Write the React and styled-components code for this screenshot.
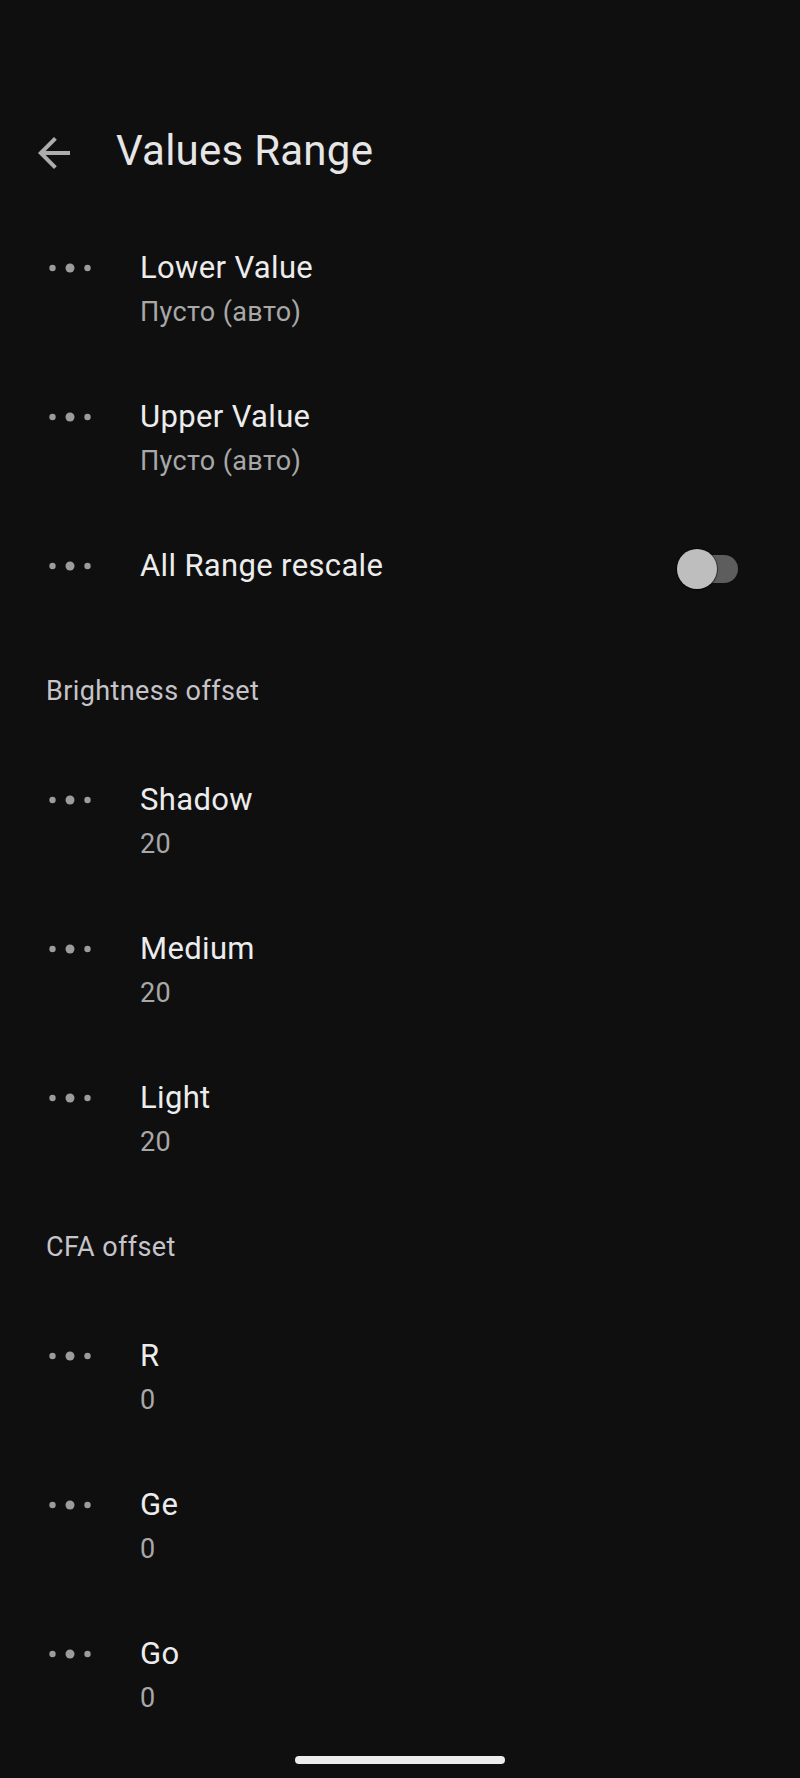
import React from 'react';
import styled, { createGlobalStyle } from 'styled-components';

const GlobalStyle = createGlobalStyle`
  html, body {
    margin: 0;
    padding: 0;
    background: #0f0f0f;
  }
  body {
    font-family: 'Roboto', 'Noto Sans', sans-serif;
    -webkit-font-smoothing: antialiased;
  }
`;

const Screen = styled.div`
  width: 800px;
  min-height: 1778px;
  background: #0f0f0f;
  display: flex;
  flex-direction: column;
  overflow: hidden;
`;

const AppBar = styled.div`
  display: flex;
  align-items: center;
  padding: 123px 0 35px 30px;
`;

const BackButton = styled.button`
  width: 48px;
  height: 48px;
  padding: 0;
  margin: 4px 38px 0 0;
  border: none;
  background: transparent;
  color: #adadad;
  display: flex;
  align-items: center;
  justify-content: center;
`;

const Title = styled.h1`
  margin: 0;
  font-size: 42px;
  line-height: 56px;
  font-weight: 400;
  letter-spacing: 0.25px;
  color: #e6e6e6;
`;

const List = styled.div`
  display: flex;
  flex-direction: column;
`;

const Row = styled.div`
  display: flex;
  align-items: flex-start;
  padding: 36px 62px ${(p) => (p.$single ? '48px' : '35px')} 48px;
`;

const Handle = styled.svg`
  flex: none;
  width: 44px;
  height: 36px;
  margin-right: 48px;
  color: #9c9c9c;
`;

const Body = styled.div`
  flex: 1;
  display: flex;
  flex-direction: column;
`;

const ItemTitle = styled.div`
  font-size: 31px;
  line-height: 36px;
  letter-spacing: 0.35px;
  color: #ececec;
`;

const ItemSummary = styled.div`
  margin-top: 10px;
  font-size: 27px;
  line-height: 32px;
  letter-spacing: 0.35px;
  color: #a8a8a8;
`;

const SectionHeader = styled.div`
  padding: 38px 0 39px 46px;
  font-size: 27px;
  line-height: 32px;
  letter-spacing: 0.4px;
  color: #c6c3c9;
`;

const Switch = styled.div`
  position: relative;
  flex: none;
  width: 61px;
  height: 40px;
  margin-top: 1px;
`;

const Track = styled.div`
  position: absolute;
  left: 5px;
  top: 6px;
  width: 56px;
  height: 28px;
  border-radius: 14px;
  background: #5d5d5d;
`;

const Thumb = styled.div`
  position: absolute;
  left: 0;
  top: 0;
  width: 40px;
  height: 40px;
  border-radius: 50%;
  background: #bebebe;
  box-shadow: 0 0 0 1px rgba(0, 0, 0, 0.35), 0 1px 2px rgba(0, 0, 0, 0.5);
`;

const GestureArea = styled.div`
  display: flex;
  justify-content: center;
  padding: 7px 0 15px;
`;

const GestureBar = styled.div`
  width: 210px;
  height: 8px;
  border-radius: 4px;
  background: #ededed;
`;

const ArrowBack = () => (
  <svg width="48" height="48" viewBox="0 0 24 24" fill="currentColor">
    <path d="M20 11H7.83l5.59-5.59L12 4l-8 8 8 8 1.41-1.41L7.83 13H20v-2z" />
  </svg>
);

const DragHandle = () => (
  <Handle viewBox="0 0 44 36" fill="currentColor">
    <circle cx="4.5" cy="18" r="3.2" />
    <circle cx="22" cy="18" r="4.5" />
    <circle cx="39.5" cy="18" r="3.2" />
  </Handle>
);

const Item = ({ title, summary, toggle }) => (
  <Row $single={!summary}>
    <DragHandle />
    <Body>
      <ItemTitle>{title}</ItemTitle>
      {summary && <ItemSummary>{summary}</ItemSummary>}
    </Body>
    {toggle && (
      <Switch>
        <Track />
        <Thumb />
      </Switch>
    )}
  </Row>
);

const App = () => {
  return (
    <>
      <GlobalStyle />
      <Screen>
        <AppBar>
          <BackButton aria-label="Back">
            <ArrowBack />
          </BackButton>
          <Title>Values Range</Title>
        </AppBar>

        <List>
          <Item title="Lower Value" summary="Пусто (авто)" />
          <Item title="Upper Value" summary="Пусто (авто)" />
          <Item title="All Range rescale" toggle />

          <SectionHeader>Brightness offset</SectionHeader>
          <Item title="Shadow" summary="20" />
          <Item title="Medium" summary="20" />
          <Item title="Light" summary="20" />

          <SectionHeader>CFA offset</SectionHeader>
          <Item title="R" summary="0" />
          <Item title="Ge" summary="0" />
          <Item title="Go" summary="0" />
        </List>

        <GestureArea>
          <GestureBar />
        </GestureArea>
      </Screen>
    </>
  );
};

export default App;
